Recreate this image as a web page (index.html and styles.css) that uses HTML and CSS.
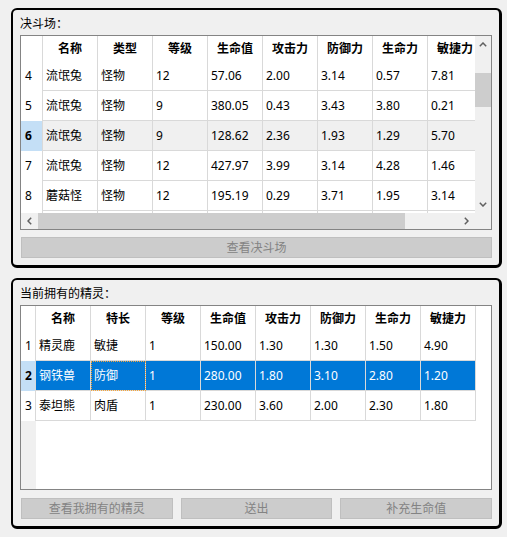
FILE: index.html
```html
<!DOCTYPE html>
<html lang="zh-CN">
<head>
<meta charset="utf-8">
<title>精灵对战</title>
<link rel="stylesheet" href="styles.css">
</head>
<body>
<section class="group group-top">
  <div class="title">决斗场：</div>
  <div class="frame frame-top">
    <div class="viewport">
      <div class="row head t1">
        <div class="vh"></div><div class="hc">名称</div><div class="hc">类型</div><div class="hc">等级</div><div class="hc">生命值</div><div class="hc">攻击力</div><div class="hc">防御力</div><div class="hc">生命力</div><div class="hc">敏捷力</div>
      </div>
      <div class="row t1">
        <div class="vh">4</div><div class="c">流氓兔</div><div class="c">怪物</div><div class="c">12</div><div class="c">57.06</div><div class="c">2.00</div><div class="c">3.14</div><div class="c">0.57</div><div class="c">7.81</div>
      </div>
      <div class="row t1">
        <div class="vh">5</div><div class="c">流氓兔</div><div class="c">怪物</div><div class="c">9</div><div class="c">380.05</div><div class="c">0.43</div><div class="c">3.43</div><div class="c">3.80</div><div class="c">0.21</div>
      </div>
      <div class="row t1 sel-gray">
        <div class="vh">6</div><div class="c">流氓兔</div><div class="c">怪物</div><div class="c">9</div><div class="c">128.62</div><div class="c">2.36</div><div class="c">1.93</div><div class="c">1.29</div><div class="c">5.70</div>
      </div>
      <div class="row t1">
        <div class="vh">7</div><div class="c">流氓兔</div><div class="c">怪物</div><div class="c">12</div><div class="c">427.97</div><div class="c">3.99</div><div class="c">3.14</div><div class="c">4.28</div><div class="c">1.46</div>
      </div>
      <div class="row t1">
        <div class="vh">8</div><div class="c">蘑菇怪</div><div class="c">怪物</div><div class="c">12</div><div class="c">195.19</div><div class="c">0.29</div><div class="c">3.71</div><div class="c">1.95</div><div class="c">3.14</div>
      </div>
      <div class="row t1">
        <div class="vh"></div><div class="c"></div><div class="c"></div><div class="c"></div><div class="c"></div><div class="c"></div><div class="c"></div><div class="c"></div><div class="c"></div>
      </div>
    </div>
    <div class="vscroll">
      <div class="sbtn"><svg class="chev-v" width="8" height="5" viewBox="0 0 8 5"><path d="M0.8 4.2 L4 1 L7.2 4.2"/></svg></div>
      <div class="vtrack"><div class="vthumb"></div></div>
      <div class="sbtn"><svg class="chev-v" width="8" height="5" viewBox="0 0 8 5"><path d="M0.8 0.8 L4 4 L7.2 0.8"/></svg></div>
    </div>
    <div class="hscroll">
      <div class="sbtn hbtn"><svg class="chev-h" width="5" height="8" viewBox="0 0 5 8"><path d="M4.2 0.8 L1 4 L4.2 7.2"/></svg></div>
      <div class="htrack"><div class="hthumb"></div></div>
      <div class="sbtn hbtn"><svg class="chev-h" width="5" height="8" viewBox="0 0 5 8"><path d="M0.8 0.8 L4 4 L0.8 7.2"/></svg></div>
    </div>
    <div class="corner"></div>
  </div>
  <div class="btn-row">
    <button class="btn" disabled>查看决斗场</button>
  </div>
</section>

<section class="group group-bottom">
  <div class="title">当前拥有的精灵：</div>
  <div class="frame frame-bottom">
    <div class="row head t2">
      <div class="vh"></div><div class="hc">名称</div><div class="hc">特长</div><div class="hc">等级</div><div class="hc">生命值</div><div class="hc">攻击力</div><div class="hc">防御力</div><div class="hc">生命力</div><div class="hc">敏捷力</div>
    </div>
    <div class="row t2">
      <div class="vh">1</div><div class="c">精灵鹿</div><div class="c">敏捷</div><div class="c">1</div><div class="c">150.00</div><div class="c">1.30</div><div class="c">1.30</div><div class="c">1.50</div><div class="c">4.90</div>
    </div>
    <div class="row t2 sel-blue">
      <div class="vh">2</div><div class="c">钢铁兽</div><div class="c focus">防御</div><div class="c">1</div><div class="c">280.00</div><div class="c">1.80</div><div class="c">3.10</div><div class="c">2.80</div><div class="c">1.20</div>
    </div>
    <div class="row t2">
      <div class="vh">3</div><div class="c">泰坦熊</div><div class="c">肉盾</div><div class="c">1</div><div class="c">230.00</div><div class="c">3.60</div><div class="c">2.00</div><div class="c">2.30</div><div class="c">1.80</div>
    </div>
    <div class="filler"><div class="filler-vh"></div></div>
  </div>
  <div class="btn-row">
    <button class="btn" disabled>查看我拥有的精灵</button>
    <button class="btn" disabled>送出</button>
    <button class="btn" disabled>补充生命值</button>
  </div>
</section>
</body>
</html>
```

FILE: styles.css
```css
* {
  box-sizing: border-box;
}

html,
body {
  margin: 0;
  padding: 0;
  background: #f0f0f0;
}

body {
  width: 507px;
  height: 537px;
  padding: 8px 5px 8px 11px;
  display: flex;
  flex-direction: column;
  gap: 10px;
  font-family: "Noto Sans", "Noto Sans CJK SC", sans-serif;
  font-size: 12px;
  color: #000;
  overflow: hidden;
}

.group {
  border: 2px solid #000;
  border-right-width: 3px;
  border-bottom-width: 3px;
  border-radius: 6px;
  padding: 6px 7px 7px 7px;
  display: flex;
  flex-direction: column;
}

.group-top {
  height: 260px;
}

.group-bottom {
  height: 251px;
}

.title {
  height: 16px;
  line-height: 16px;
  margin-bottom: 3px;
  white-space: nowrap;
}

.frame {
  border: 1px solid #848484;
  background: #fff;
}

.frame-top {
  height: 195px;
  display: grid;
  grid-template-columns: 454px 16px;
  grid-template-rows: 177px 16px;
}

.frame-bottom {
  height: 185px;
  display: flex;
  flex-direction: column;
}

.viewport {
  overflow: hidden;
  background: #fff;
}

.row {
  display: grid;
  height: 30px;
}

.row.head {
  height: 25px;
}

.t1 {
  grid-template-columns: 22px repeat(8, 55px);
}

.t2 {
  grid-template-columns: 15px repeat(8, 55px);
}

.vh {
  border-right: 1px solid #d9d9d9;
  padding-left: 4px;
  line-height: 30px;
  white-space: nowrap;
  overflow: hidden;
}

.hc {
  border-right: 1px solid #d9d9d9;
  font-weight: 700;
  text-align: center;
  line-height: 25px;
  white-space: nowrap;
  overflow: hidden;
}

.c {
  border-right: 1px solid #d9d9d9;
  border-bottom: 1px solid #d9d9d9;
  padding-left: 3px;
  line-height: 29px;
  white-space: nowrap;
  overflow: hidden;
}

.sel-gray .c {
  background: #f0f0f0;
}

.sel-gray .vh,
.sel-blue .vh {
  background: #c4dff6;
  font-weight: 700;
}

.sel-blue .c {
  background: #0078d7;
  color: #fff;
}

.focus {
  outline: 1px dotted #f3a43c;
  outline-offset: -1px;
}

.filler {
  flex: 1;
  display: flex;
}

.filler-vh {
  width: 15px;
  background: #f0f0f0;
}

/* scrollbars */
.vscroll {
  display: flex;
  flex-direction: column;
  background: #f0f0f0;
}

.hscroll {
  display: flex;
  background: #f0f0f0;
}

.corner {
  background: #f0f0f0;
}

.sbtn {
  height: 17px;
  display: flex;
  align-items: center;
  justify-content: center;
  flex: none;
}

.hbtn {
  height: 16px;
  width: 17px;
}

.sbtn svg {
  display: block;
}

.sbtn path {
  fill: none;
  stroke: #606060;
  stroke-width: 1.5;
}

.vtrack {
  flex: 1;
}

.vthumb {
  margin-top: 20px;
  height: 34px;
  background: #cdcdcd;
}

.htrack {
  flex: 1;
}

.hthumb {
  width: 367px;
  height: 16px;
  background: #cdcdcd;
}

/* buttons */
.btn-row {
  display: flex;
  gap: 8px;
  margin-top: 7px;
  margin-left: 1px;
}

.group-bottom .btn-row {
  margin-top: 8px;
}

.btn {
  flex: 1;
  height: 21px;
  margin: 0;
  padding: 0;
  border: 1px solid #bfbfbf;
  background: #cccccc;
  color: #838383;
  font-family: "Noto Sans", "Noto Sans CJK SC", sans-serif;
  font-size: 12px;
  line-height: 19px;
  text-align: center;
}
```
